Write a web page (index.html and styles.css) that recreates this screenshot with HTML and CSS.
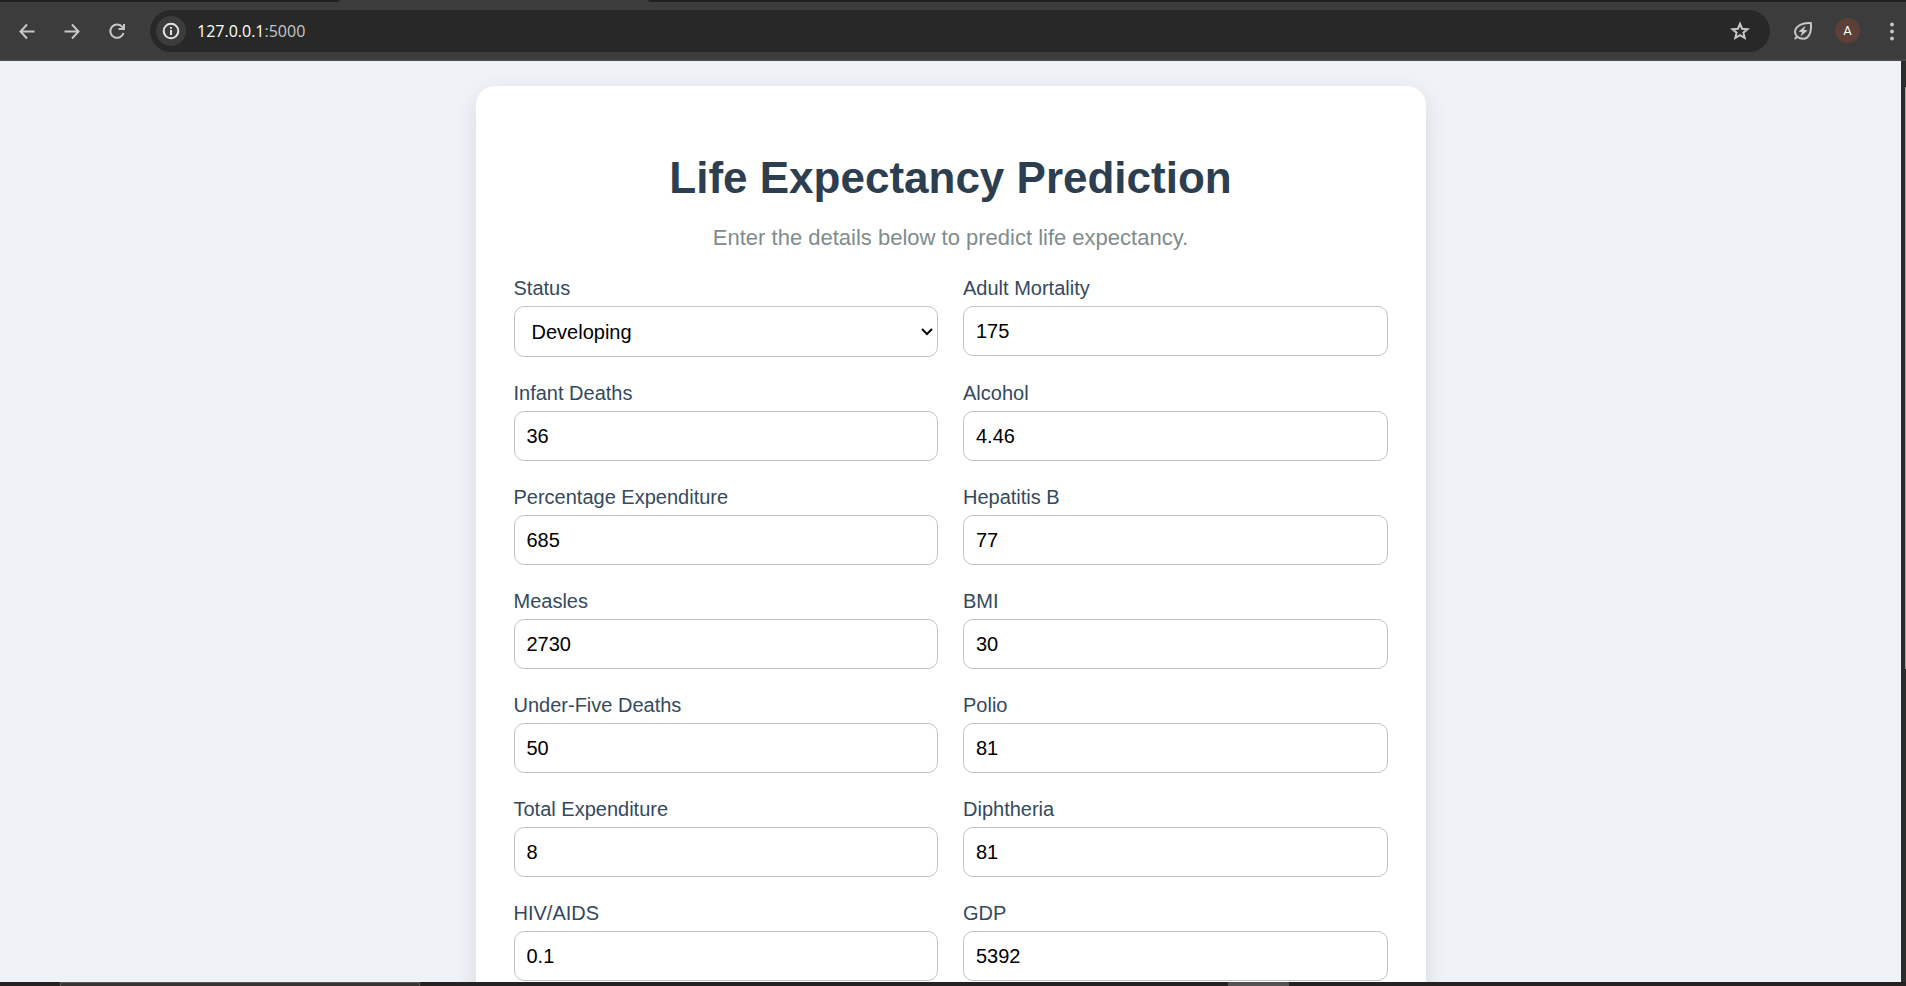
FILE: index.html
```html
<!DOCTYPE html>
<html lang="en">
<head>
<meta charset="utf-8">
<title>Life Expectancy Prediction</title>
<link rel="stylesheet" href="styles.css">
</head>
<body>
<header class="browser">
  <div class="tabstrip"><span class="tabs-before"></span><span class="tab-active"></span><span class="tabs-after"></span></div>
  <div class="toolbar">
    <nav class="nav-buttons" aria-label="Navigation">
      <button class="icon-button" type="button" aria-label="Back"><svg width="20" height="20" viewBox="0 0 20 20"><path d="M17.500 10.500H4M10 3.500L3.500 10.500L10 17.500"/></svg></button>
      <button class="icon-button" type="button" aria-label="Forward"><svg width="20" height="20" viewBox="0 0 20 20"><path d="M2.500 10.500H16M10 3.500L16.500 10.500L10 17.500"/></svg></button>
      <button class="icon-button" type="button" aria-label="Reload"><svg width="20" height="20" viewBox="0 0 20 20"><path d="M16.500 12A6.700 6.700 0 1 1 15 5.600L16.500 7.300M17 3V8H11.500"/></svg></button>
    </nav>
    <div class="address-bar">
      <button class="site-info" type="button" aria-label="Site information"><svg width="20" height="20" viewBox="0 0 20 20"><circle cx="10" cy="10" r="7.300"/><path d="M10 9V14M10 6V7.800"/></svg></button>
      <span class="url"><span class="host">127.0.0.1</span>:5000</span>
      <button class="icon-button bookmark" type="button" aria-label="Bookmark"><svg width="20" height="20" viewBox="0 0 20 20"><path d="M10 2.800L12.100 7.700L17.500 8.200L13.400 11.700L14.700 17L10 14.200L5.300 17L6.600 11.700L2.500 8.200L7.900 7.700Z"/></svg></button>
    </div>
    <div class="tools">
      <button class="icon-button" type="button" aria-label="Energy saver"><svg width="20" height="20" viewBox="0 0 20 20"><path d="M4 15.500C-1 9.500 4 1.500 17.800 1.900C18.600 8 17.500 17.800 10 17.800C7.500 17.800 5.700 17 4 15.500L1.800 18.200"/><path class="bolt" d="M12.500 4.800L5.500 10.500L9 11.300L7.500 15.600L14.500 9.600L11 8.800Z"/></svg></button>
      <button class="avatar" type="button">A</button>
      <button class="icon-button menu" type="button" aria-label="Menu"><svg width="20" height="20" viewBox="0 0 20 20"><circle cx="10" cy="3.500" r="1.900"/><circle cx="10" cy="10.500" r="1.900"/><circle cx="10" cy="17.500" r="1.900"/></svg></button>
    </div>
  </div>
</header>
<div class="viewport">
  <main class="page">
    <section class="card">
      <h1 class="title">Life Expectancy Prediction</h1>
      <p class="subtitle">Enter the details below to predict life expectancy.</p>
      <form class="fields">
        <div class="field"><label for="status">Status</label>
          <div class="select-box"><select id="status"><option>Developing</option><option>Developed</option></select><svg class="chevron" width="12" height="8" viewBox="0 0 12 8"><path d="M1 1L6 6L11 1"/></svg></div>
        </div>
        <div class="field"><label for="adult">Adult Mortality</label><input id="adult" type="text" value="175"></div>
        <div class="field"><label for="infant">Infant Deaths</label><input id="infant" type="text" value="36"></div>
        <div class="field"><label for="alcohol">Alcohol</label><input id="alcohol" type="text" value="4.46"></div>
        <div class="field"><label for="percentage">Percentage Expenditure</label><input id="percentage" type="text" value="685"></div>
        <div class="field"><label for="hepatitis">Hepatitis B</label><input id="hepatitis" type="text" value="77"></div>
        <div class="field"><label for="measles">Measles</label><input id="measles" type="text" value="2730"></div>
        <div class="field"><label for="bmi">BMI</label><input id="bmi" type="text" value="30"></div>
        <div class="field"><label for="under-five">Under-Five Deaths</label><input id="under-five" type="text" value="50"></div>
        <div class="field"><label for="polio">Polio</label><input id="polio" type="text" value="81"></div>
        <div class="field"><label for="total">Total Expenditure</label><input id="total" type="text" value="8"></div>
        <div class="field"><label for="diphtheria">Diphtheria</label><input id="diphtheria" type="text" value="81"></div>
        <div class="field"><label for="hiv">HIV/AIDS</label><input id="hiv" type="text" value="0.1"></div>
        <div class="field"><label for="gdp">GDP</label><input id="gdp" type="text" value="5392"></div>
      </form>
    </section>
  </main>
  <div class="scrollbar"><span class="thumb"></span></div>
</div>
<footer class="taskbar"><span class="task-search"></span><span class="task-active"></span></footer>
</body>
</html>
```
FILE: styles.css
```css
* { box-sizing: border-box; }
body {
  margin: 0;
  height: 100vh;
  display: flex;
  flex-direction: column;
  overflow: hidden;
  font-family: "Liberation Sans", Arial, sans-serif;
  background: #eff3f8;
}
button { padding: 0; border: 0; background: none; color: inherit; font: inherit; }

/* Browser frame */
.browser { flex: none; background: #3c3c3c; color: #c7c7c7; }
.tabstrip { display: flex; height: 2px; }
.tabs-before { flex: 340; background: #1f2020; border-bottom-right-radius: 6px 2px; }
.tab-active { flex: 308; }
.tabs-after { flex: 1258; background: #1f1f1f; border-bottom-left-radius: 6px 2px; }
.toolbar {
  display: flex;
  align-items: center;
  height: 59px;
  padding: 0 4px 0 17px;
  border-bottom: 2px solid #474747;
}
.nav-buttons { display: flex; gap: 25px; }
.icon-button { display: flex; flex: none; width: 20px; height: 20px; }
svg { display: block; fill: none; stroke: currentColor; stroke-width: 2; }
.address-bar {
  flex: 1;
  display: flex;
  align-items: center;
  height: 42px;
  margin-left: 23px;
  padding: 0 20px 0 6px;
  border-radius: 21px;
  background: #282828;
}
.site-info {
  display: grid;
  place-items: center;
  width: 30px;
  height: 30px;
  border-radius: 50%;
  background: #3c3c3c;
  color: #e3e3e3;
}
.url { flex: 1; margin-left: 11px; font: 16px "Open Sans", "Noto Sans", sans-serif; color: #c7c7c7; }
.host { color: #ffffff; }
.tools { display: flex; align-items: center; margin-left: 23px; }
.bolt { fill: currentColor; stroke: none; }
.avatar {
  width: 25px;
  height: 25px;
  margin: 0 22px;
  border-radius: 50%;
  background: #5d4037;
  color: #ffffff;
  font: 13px/26px Roboto, sans-serif;
}
.menu svg { fill: currentColor; stroke: none; }

/* Page */
.viewport { flex: 1; min-height: 0; display: flex; }
.page { flex: 1; min-width: 0; overflow: hidden; padding: 25px; }
.card {
  max-width: 950px;
  margin: 0 auto;
  padding: 66px 38px 38px;
  border-radius: 19px;
  background: #ffffff;
  box-shadow: 0 8px 25px rgba(0, 0, 0, 0.1);
}
.title { margin: 0; text-align: center; font-size: 44px; line-height: 52px; color: #2c3e50; }
.subtitle { margin: 21px 0 26px; text-align: center; font-size: 22px; line-height: 26px; color: #7f8c8d; }
.fields { display: grid; grid-template-columns: 1fr 1fr; gap: 25px; }
.field { display: flex; flex-direction: column; gap: 6px; min-width: 0; }
.field label { font-size: 20px; line-height: 23px; color: #34495e; }
.field input,
.field select {
  width: 100%;
  height: 50px;
  margin: 0;
  padding: 0 12px;
  border: 1px solid #bdc3c7;
  border-radius: 10px;
  background: #ffffff;
  color: #000000;
  font: 20px "Liberation Sans", Arial, sans-serif;
}
.field select { display: block; height: 51px; padding: 0 17px; appearance: none; }
.select-box { position: relative; }
.chevron { position: absolute; right: 5px; top: 22px; color: #000000; pointer-events: none; }
.scrollbar { flex: none; width: 5px; padding: 26px 0 0 4px; background: #2c2c2c; }
.thumb { display: block; height: 65%; background: #9f9f9f; }

/* Desktop taskbar */
.taskbar { flex: none; display: flex; height: 4px; padding-left: 60px; background: #242223; }
.task-search { width: 360px; border: 1px solid #5a5858; border-bottom: 0; background: #363232; }
.task-active { width: 61px; margin-left: 808px; background: #555353; }
```
